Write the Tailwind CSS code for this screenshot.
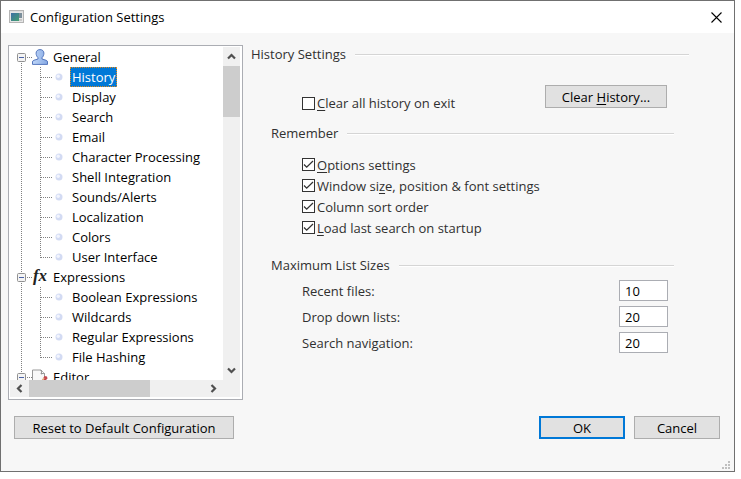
<!DOCTYPE html>
<html lang="en">
<head>
    <meta charset="UTF-8">
    <meta name="viewport" content="width=device-width, initial-scale=1.0">
    <title>Configuration Settings</title>
    <script src="https://cdn.jsdelivr.net/npm/@tailwindcss/browser@4"></script>
</head>
<body class="bg-white font-['Open_Sans','Noto_Sans',sans-serif] text-[13px] leading-[20px] text-black">
    <div class="relative mr-[6px] border border-[#707070] bg-[#f7f7f7]">
        <!-- Title bar -->
        <header class="flex h-8 items-center bg-white pl-2">
            <svg class="h-[15px] w-[15px] shrink-0" viewBox="0 0 15 15">
                <defs>
                    <linearGradient id="app" x1="0" y1="0" x2="1" y2="1">
                        <stop offset="0" stop-color="#3e6fa5"/>
                        <stop offset="1" stop-color="#43a070"/>
                    </linearGradient>
                </defs>
                <rect x=".5" y=".5" width="14" height="12" fill="#e6e6e6" stroke="#b5b5b5"/>
                <path d="M1 1.500h13" stroke="#ddd"/>
                <rect x="2" y="3" width="8" height="8" fill="url(#app)"/>
                <rect x="10" y="3" width="3" height="5" fill="#7c8f9c"/>
                <rect x="10" y="9" width="3" height="2" fill="#c8c8c8"/>
            </svg>
            <h1 class="ml-1.5 grow">Configuration Settings</h1>
            <button aria-label="Close" class="flex h-8 w-[35px] items-center justify-center">
                <svg class="h-[11px] w-[11px]" viewBox="0 0 11 11" fill="none" stroke="#000" stroke-width="1.1"><path d="M.5.5l10 10M10.5.5l-10 10"/></svg>
            </button>
        </header>

        <div class="flex gap-2 pt-3 pr-[45px] pl-[7px]">
            <!-- Category tree -->
            <nav aria-label="Categories" class="w-[235px] shrink-0 border border-[#abadb3] bg-white p-px pb-[2px]">
                <div class="flex">
                    <div class="h-[333px] grow overflow-hidden" id="tree"></div>
                    <div class="mr-px flex w-[17px] shrink-0 flex-col bg-[#f0f0f0]">
                        <button aria-label="Scroll up" class="flex h-[19px] shrink-0 items-center justify-center">
                            <svg class="h-[7px] w-[9px]" viewBox="0 0 9 7" fill="none" stroke="#505050" stroke-width="2.200"><path d="M1 5.500l3.500-3.500L8 5.500"/></svg>
                        </button>
                        <div class="h-[51px] bg-[#cdcdcd]"></div>
                        <button aria-label="Scroll down" class="mt-auto flex h-[19px] shrink-0 items-center justify-center">
                            <svg class="h-[7px] w-[9px]" viewBox="0 0 9 7" fill="none" stroke="#505050" stroke-width="2.200"><path d="M1 1.500l3.500 3.500L8 1.500"/></svg>
                        </button>
                    </div>
                </div>
                <div class="mr-px flex h-[17px] bg-[#f0f0f0] pr-[17px]">
                    <button aria-label="Scroll left" class="flex w-[19px] items-center justify-center">
                        <svg class="h-[9px] w-[7px]" viewBox="0 0 7 9" fill="none" stroke="#505050" stroke-width="2.200"><path d="M5.500 1L2 4.500 5.500 8"/></svg>
                    </button>
                    <div class="w-[121px] bg-[#cdcdcd]"></div>
                    <button aria-label="Scroll right" class="ml-auto flex w-[19px] items-center justify-center">
                        <svg class="h-[9px] w-[7px]" viewBox="0 0 7 9" fill="none" stroke="#505050" stroke-width="2.200"><path d="M1.500 1l3.500 3.500L1.500 8"/></svg>
                    </button>
                </div>
            </nav>

            <!-- Settings page -->
            <main class="grow text-[#303030]">
                <h2 class="flex items-center gap-[9px] leading-[18px]">History Settings<span class="mt-[2px] h-[2px] grow border-t border-b border-t-[#d5d5d5] border-b-white"></span></h2>

                <div class="mt-[22px] mr-[22px] ml-[51px] flex h-[27px] justify-between">
                    <label class="flex items-center gap-[2px] self-end leading-[18px]">
                        <input type="checkbox" class="h-[13px] w-[13px] appearance-none border border-[#333] bg-white">
                        <span><u class="underline-offset-2">C</u>lear all history on exit</span>
                    </label>
                    <button class="h-[23px] w-[122px] border border-[#adadad] bg-[#e1e1e1] text-black">Clear <u class="underline-offset-2">H</u>istory...</button>
                </div>

                <h2 class="mt-3 mr-[15px] ml-5 flex items-center gap-[9px] leading-[18px]">Remember<span class="mt-[2px] h-[2px] grow border-t border-b border-t-[#d5d5d5] border-b-white"></span></h2>
                <div class="mt-3 ml-[51px]" id="remember"></div>

                <h2 class="mt-[18px] mr-[15px] ml-5 flex items-center gap-[9px] leading-[18px]">Maximum List Sizes<span class="mt-[2px] h-[2px] grow border-t border-b border-t-[#d5d5d5] border-b-white"></span></h2>
                <div class="mt-1.5 mr-[21px] ml-[51px] flex flex-col gap-[5px]" id="sizes"></div>
            </main>
        </div>

        <footer class="mt-4 mb-8 flex gap-[9px] pr-[14px] pl-[13px]">
            <button class="mr-auto h-[23px] w-[220px] border border-[#adadad] bg-[#e1e1e1]">Reset to Default Configuration</button>
            <button class="flex h-[23px] w-[86px] items-center justify-center border-2 border-[#0078d7] bg-[#e1e1e1]">OK</button>
            <button class="h-[23px] w-[86px] border border-[#adadad] bg-[#e1e1e1]">Cancel</button>
        </footer>

        <svg class="absolute right-1 bottom-[2px] h-2 w-2" viewBox="0 0 8 8" fill="#bfbfbf"><path d="M6 0h2v2H6zM3 3h2v2H3zM6 3h2v2H6zM0 6h2v2H0zM3 6h2v2H3zM6 6h2v2H6z"/></svg>
    </div>

    <script>
        const icons = {
            user: `<svg class="h-4 w-4" viewBox="0 0 16 16"><defs><linearGradient id="usr" x1="0" y1="0" x2="1" y2="0"><stop offset="0" stop-color="#c0d7f8"/><stop offset="1" stop-color="#86a9e4"/></linearGradient></defs><path d="M8 .6c2.500 0 3.900 1.500 3.900 3.600 0 2-.9 3.500-1.900 4.500v1.300l4.200 1.300c.9.300 1.300.9 1.300 1.700v2.400H.5V13c0-.8.4-1.400 1.300-1.700L6 10V8.700c-1-1-1.900-2.500-1.900-4.500C4.100 2.100 5.500.6 8 .6z" fill="url(#usr)" stroke="#5577bd"/></svg>`,
            fx: `<span aria-hidden="true" class="block w-4 pb-[2px] text-center font-['Liberation_Serif',serif] text-[17px] leading-[16px] font-bold text-[#222] italic">fx</span>`,
            page: `<svg class="h-4 w-4" viewBox="0 0 16 16"><path d="M.5 1h8.500l3.500 3.500V15H.5z" fill="#f8f8f8" stroke="#999"/><path d="M8.500 1c1.300 1 1.300 2.300.5 4 1.500-.7 2.500-.5 3.500-.5" fill="#fff" stroke="#888"/><path d="M9.500 12l3-5 2.500.5.500 2-4 4z" fill="#c4474d"/><path d="M9.500 12l2-3.500 1 .8-2 3.700z" fill="#e9c08a"/></svg>`
        };

        const groups = [
            { name: 'General', icon: 'user', items: ['History', 'Display', 'Search', 'Email', 'Character Processing', 'Shell Integration', 'Sounds/Alerts', 'Localization', 'Colors', 'User Interface'] },
            { name: 'Expressions', icon: 'fx', items: ['Boolean Expressions', 'Wildcards', 'Regular Expressions', 'File Hashing'] },
            { name: 'Editor', icon: 'page', items: [] }
        ];
        const selected = 'History';

        const toggle = (first) => `
            <button aria-label="Collapse" class="ml-[7px] h-5 w-[15px] shrink-0">
                <svg class="h-5 w-[15px]" viewBox="0 0 15 20" fill="none">
                    <g shape-rendering="crispEdges" stroke="#808080" stroke-dasharray="1 1">
                        <path d="M4.500 ${first ? 10 : 0}V20"/>
                        <path d="M10 10.500h5"/>
                    </g>
                    <rect x=".5" y="6.500" width="8" height="8" rx="1" fill="#f4f4f4" stroke="#919191"/>
                    <path d="M2 10.500h5" stroke="#4b63a7"/>
                </svg>
            </button>`;

        // dotted connectors: one line per level, the last child gets a half-height one
        const leaf = (name, last) => `
            <li class="flex h-5 items-center">
                <svg class="ml-[11px] h-5 w-[49px] shrink-0" viewBox="0 0 49 20" fill="none">
                    <g shape-rendering="crispEdges" stroke="#808080" stroke-dasharray="1 1">
                        <path d="M.5 0V20"/>
                        <path d="M19.500 0V${last ? 11 : 20}"/>
                        <path d="M20 10.500h11"/>
                    </g>
                    <circle cx="38" cy="10" r="3.500" fill="#d3dbf3"/>
                    <circle cx="37.200" cy="9.200" r="1.700" fill="#f2f5fe"/>
                </svg>
                <button class="${name === selected ? 'h-5 border border-dotted border-[#e08a20] bg-[#0078d7] px-px leading-[18px] text-white' : 'h-5 px-[2px]'} whitespace-nowrap">${name}</button>
            </li>`;

        document.getElementById('tree').innerHTML = '<ul>' + groups.map((g, i) => `
            <li>
                <div class="flex h-5 items-center">
                    ${toggle(i === 0)}
                    <span class="shrink-0">${icons[g.icon]}</span>
                    <span class="ml-[5px]">${g.name}</span>
                </div>
                <ul>${g.items.map((name, n) => leaf(name, n === g.items.length - 1)).join('')}</ul>
            </li>`).join('') + '</ul>';

        const remember = [
            '<u class="underline-offset-2">O</u>ptions settings',
            'Window si<u class="underline-offset-2">z</u>e, position &amp; font settings',
            'Column sort order',
            '<u class="underline-offset-2">L</u>oad last search on startup'
        ];
        document.getElementById('remember').innerHTML = remember.map(text => `
            <label class="flex h-[21px] items-center gap-[2px]">
                <span class="grid">
                    <input type="checkbox" checked class="peer col-start-1 row-start-1 h-[13px] w-[13px] appearance-none border border-[#333] bg-white">
                    <svg class="pointer-events-none invisible col-start-1 row-start-1 h-[13px] w-[13px] peer-checked:visible" viewBox="0 0 13 13" fill="none" stroke="#333" stroke-width="1.300"><path d="M2 6.500L4.700 9.200 11 3"/></svg>
                </span>
                <span>${text}</span>
            </label>`).join('');

        const sizes = [['recent', 'Recent files:', 10], ['lists', 'Drop down lists:', 20], ['navigation', 'Search navigation:', 20]];
        document.getElementById('sizes').innerHTML = sizes.map(([id, label, value]) => `
            <div class="flex items-center justify-between">
                <label for="${id}">${label}</label>
                <input id="${id}" type="text" value="${value}" class="h-[21px] w-[49px] border border-[#abadb3] bg-white px-[5px] text-black">
            </div>`).join('');
    </script>
</body>
</html>
